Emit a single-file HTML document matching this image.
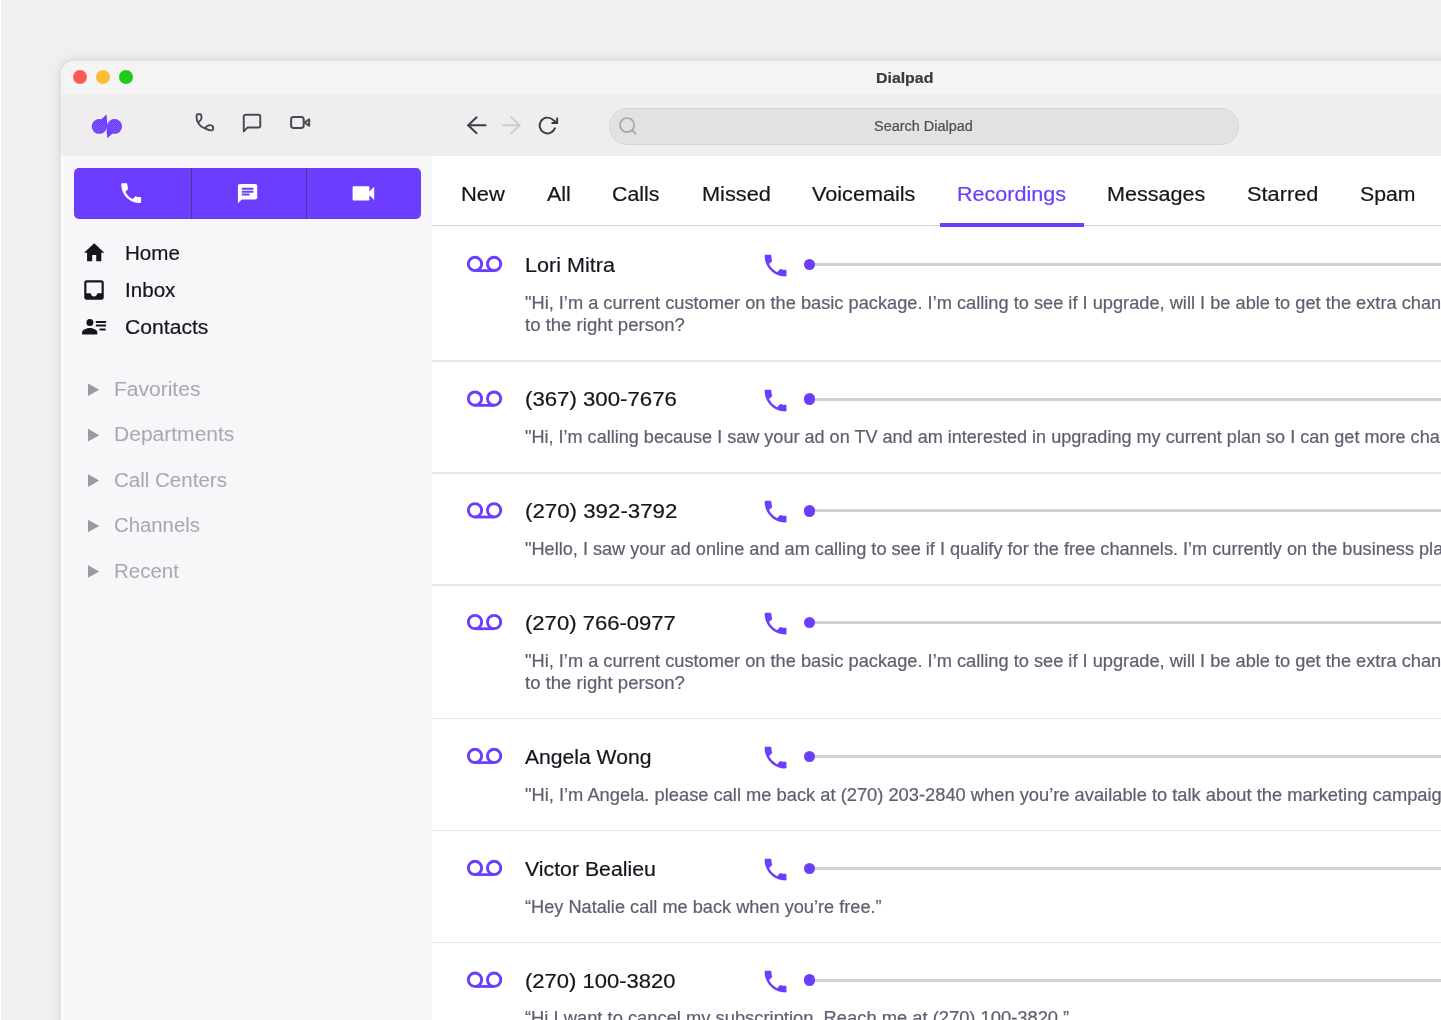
<!DOCTYPE html>
<html lang="en">
<head>
<meta charset="utf-8">
<title>Dialpad</title>
<style>
html,body{margin:0;padding:0;overflow:hidden;}
body{width:1441px;height:1020px;overflow:hidden;position:relative;background:#f1f0ee;font-family:"Liberation Sans",Arial,sans-serif;}
.edge{position:absolute;left:0;top:0;width:1px;height:1020px;background:#fff;}
.win{position:absolute;left:59px;top:59px;width:1700px;height:1100px;border:2px solid #e1e1e1;border-radius:16px;background:#fff;overflow:hidden;box-shadow:0 0 0 1px #e3e3e3,0 0 0 4px #eae9e9,0 0 0 10.500px #efeded;}
.abs{position:absolute;}
.titlebar{left:61px;top:61px;width:1400px;height:33px;background:#f4f4f4;border-top-left-radius:14px;}
.toolbar{left:61px;top:94px;width:1400px;height:62px;background:#efedee;}
.sidebar{left:61px;top:156px;width:371px;height:900px;background:#f7f7f9;}
.main{left:432px;top:156px;width:1100px;height:900px;background:#fff;}
.light{width:14px;height:14px;border-radius:50%;top:69.9px;}
.search{left:608.500px;top:107.500px;width:628.500px;height:35px;border-radius:19px;background:#e2e2e2;border:1px dotted #c6c5d4;}
.bar{left:74px;top:168px;width:347px;height:50.5px;border-radius:5px;background:#6c3dff;}
.div{top:168px;width:1px;height:50.5px;background:#4b3a93;}
.sep{left:432px;width:1100px;height:1.800px;background:#e5e4e6;}
.track{left:810px;width:700px;height:3px;background:#d0ced9;border-radius:2px;}
.dot{width:11.6px;height:11.6px;border-radius:50%;background:#6c3dff;left:803.8px;}
.t{position:absolute;white-space:nowrap;-webkit-text-stroke:0.2px currentColor;transform-origin:0 0;}
svg{position:absolute;overflow:visible;}
</style>
</head>
<body>
<div class="edge"></div>
<div class="win"></div>
<div class="abs titlebar"></div>
<div class="abs toolbar"></div>
<div class="abs sidebar"></div>
<div class="abs main"></div>
<div class="abs" style="left:61px;top:156px;width:2.200px;height:900px;background:#fefeff;"></div>

<!-- traffic lights -->
<div class="abs light" style="left:72.9px;background:#fd5b50;"></div>
<div class="abs light" style="left:96px;background:#febb34;"></div>
<div class="abs light" style="left:119.1px;background:#1fc91a;"></div>

<!-- logo -->
<svg style="left:82px;top:106px" width="50" height="40" viewBox="82 106 50 40">
 <defs>
  <pattern id="dots" x="82" y="106" width="2" height="2" patternUnits="userSpaceOnUse"><circle cx=".5" cy=".5" r=".3" fill="#fff" fill-opacity=".55"/><circle cx="1.5" cy="1.5" r=".3" fill="#fff" fill-opacity=".55"/></pattern>
  <clipPath id="lg"><circle cx="99.250" cy="126.400" r="6.400"/><circle cx="114.500" cy="126.400" r="6.400"/></clipPath>
 </defs>
 <g fill="#6c3dff">
 <circle cx="99.250" cy="126.400" r="7.450"/>
 <circle cx="114.500" cy="126.400" r="7.450"/>
 <polygon points="106.500,114.500 107.500,128.500 99.300,121.200"/>
 <polygon points="107.300,138.300 106.200,124.500 114.400,131.700"/>
 </g>
 <rect x="90" y="116" width="34" height="22" fill="url(#dots)" clip-path="url(#lg)"/>
</svg>

<!-- toolbar outline icons -->
<svg style="left:190px;top:108px" width="30" height="30" viewBox="190 108 30 30" fill="none" stroke="#4a4857" stroke-width="1.9" stroke-linecap="round" stroke-linejoin="round"><path d="M197.300 121 C198.700 124.700 201.600 127.600 205.800 128.600"/><path d="M197.300 121 C196.600 119 196.400 117 196.600 115.600 C196.700 114.600 197.200 114.300 198 114.250 L200 114.250 C200.800 114.300 201.200 114.700 201.350 115.600 C201.600 117 201.500 118.400 201.100 119.400 C200.600 120.400 199.300 121.400 198.300 122.400"/><path d="M205.800 128.600 C207.500 129.500 210.500 130.600 212 130.300 C213.300 130 213.600 127.500 212.800 126.400 C212 125.400 210 125 208.700 125.400 C207.300 125.900 205.800 127.300 204.800 128.200"/></svg>
<svg style="left:241.4px;top:111.7px" width="22" height="22" viewBox="0 0 24 24" fill="none" stroke="#4a4857" stroke-width="2.1" stroke-linecap="round" stroke-linejoin="round"><path d="M21 15a2 2 0 0 1-2 2H7l-4 4V5a2 2 0 0 1 2-2h14a2 2 0 0 1 2 2z"/></svg>
<svg style="left:288px;top:110px" width="26" height="26" viewBox="288 110 26 26" fill="none" stroke="#4a4857" stroke-width="2" stroke-linecap="round" stroke-linejoin="round"><rect x="291.1" y="117.1" width="12.6" height="10.8" rx="2.4"/><polygon points="304.6,122.5 309.1,119.3 309.1,125.8"/></svg>

<!-- nav arrows -->
<svg style="left:460px;top:110px" width="110" height="30" viewBox="460 110 110 30" fill="none" stroke-width="1.9" stroke-linecap="round" stroke-linejoin="round">
 <g stroke="#3b3a47"><line x1="468.2" y1="125.3" x2="485.6" y2="125.3"/><polyline points="476.6,117.3 468.2,125.3 476.6,133.2"/></g>
 <g stroke="#cdccd9"><line x1="503.2" y1="125.3" x2="519.6" y2="125.3"/><polyline points="511.2,117.3 519.6,125.3 511.2,133.2"/></g>
</svg>
<svg style="left:537.3px;top:115.3px" width="21" height="21" viewBox="0 0 24 24" fill="none" stroke="#3b3a47" stroke-width="2.2" stroke-linecap="round" stroke-linejoin="round"><polyline points="23 3.600 23 9.200 17.400 9.200"/><path d="M20.490 15a9 9 0 1 1-2.120-9.360L23 9.200"/></svg>

<!-- search -->
<div class="abs search"></div>
<svg style="left:616px;top:114px" width="24" height="24" viewBox="616 114 24 24" fill="none" stroke="#a5a4b0" stroke-width="1.7" stroke-linecap="round"><circle cx="627.1" cy="125.1" r="7.1"/><line x1="632.4" y1="130.4" x2="635.8" y2="133.8"/></svg>

<!-- purple bar -->
<div class="abs bar"></div>
<div class="abs div" style="left:191px"></div>
<div class="abs div" style="left:306px"></div>
<svg style="left:118.1px;top:179.8px" width="26.4" height="26.4" viewBox="0 0 24 24" fill="#fff"><path d="M6.62 10.79c1.44 2.83 3.76 5.14 6.59 6.59l2.2-2.2c.27-.27.67-.36 1.02-.24 1.12.37 2.33.57 3.57.57.55 0 1 .45 1 1V20c0 .55-.45 1-1 1-9.39 0-17-7.610-17-17 0-.55.45-1 1-1h3.500c.55 0 1 .45 1 1 0 1.250.2 2.450.57 3.570.11.350.03.740-.25 1.020l-2.200 2.200z"/></svg>
<svg style="left:235.9px;top:182.1px" width="23.2" height="23.2" viewBox="0 0 24 24" fill="#fff"><path d="M20 2H4c-1.1 0-1.990.9-1.990 2L2 22l4-4h14c1.100 0 2-.9 2-2V4c0-1.100-.9-2-2-2zM6 9h12v2H6V9zm8 5H6v-2h8v2zm4-6H6V6h12v2z"/></svg>
<svg style="left:348.700px;top:178.900px" width="28.8" height="28.8" viewBox="0 0 24 24" fill="#fff"><path d="M17 10.500V7c0-.55-.45-1-1-1H4c-.55 0-1 .45-1 1v10c0 .55.45 1 1 1h12c.55 0 1-.45 1-1v-3.500l4 4v-11l-4 4z"/></svg>

<!-- sidebar nav icons -->
<svg style="left:81.700px;top:239.800px" width="24.400" height="25.600" viewBox="0 0 24 24" preserveAspectRatio="none" fill="#16151d"><path d="M10 20v-6h4v6h5v-8h3L12 3 2 12h3v8z"/></svg>
<svg style="left:80.9px;top:276.7px" width="26" height="26" viewBox="0 0 24 24" fill="#16151d"><path d="M19 3H4.990c-1.110 0-1.980.9-1.980 2L3 19c0 1.100.88 2 1.990 2H19c1.100 0 2-.9 2-2V5c0-1.100-.9-2-2-2zm0 12h-4c0 1.660-1.350 3-3 3s-3-1.340-3-3H4.990V5H19v10z"/></svg>
<svg style="left:80px;top:316px" width="30" height="22" viewBox="80 316 30 22" fill="#16151d">
 <circle cx="89.9" cy="322.6" r="3.5"/>
 <path d="M82.100 334.400 v-1.900 c0-3 4.800-4.600 7.700-4.600 s7.500 1.600 7.500 4.600 v1.900z"/>
 <rect x="95.800" y="321.100" width="10.300" height="1.900" rx=".4"/>
 <rect x="95.800" y="324.600" width="10.300" height="1.900" rx=".4"/>
 <rect x="99.500" y="328.600" width="6.200" height="2" rx=".4"/>
</svg>

<!-- section triangles -->
<svg style="left:80px;top:370px" width="30" height="220" viewBox="80 370 30 220" fill="#9b9aa2">
 <polygon points="88,383.400 99.200,389.700 88,396"/>
 <polygon points="88,428.850 99.200,435.150 88,441.450"/>
 <polygon points="88,474.300 99.200,480.600 88,486.900"/>
 <polygon points="88,519.750 99.200,526.050 88,532.350"/>
 <polygon points="88,565.200 99.200,571.500 88,577.800"/>
</svg>

<!-- tabs border + active underline -->
<div class="abs" style="left:432px;top:224.900px;width:1100px;height:1.600px;background:#d6d5df;"></div>
<div class="abs" style="left:939.700px;top:223.100px;width:143.900px;height:3.500px;background:#6c3dff;"></div>

<svg style="left:460px;top:251px" width="50" height="26" viewBox="460 251 50 26" fill="none" stroke="#6c3dff" stroke-width="2.9"><circle cx="475" cy="263.90" r="6.650"/><circle cx="494.100" cy="263.90" r="6.650"/><line x1="475" y1="270.65" x2="494.100" y2="270.65" stroke-width="2.8"/></svg>
<svg style="left:760.650px;top:251.00px" width="29.200" height="29.200" viewBox="0 0 24 24" fill="#6c3dff"><path d="M6.620 10.790c1.440 2.830 3.760 5.140 6.590 6.590l2.200-2.200c.27-.27.67-.36 1.020-.24 1.120.37 2.330.57 3.570.57.55 0 1 .45 1 1V20c0 .55-.45 1-1 1-9.390 0-17-7.610-17-17 0-.55.45-1 1-1h3.500c.55 0 1 .45 1 1 0 1.250.2 2.450.57 3.570.11.350.03.740-.25 1.020l-2.200 2.200z"/></svg>
<div class="abs track" style="top:262.95px"></div>
<div class="abs dot" style="top:258.60px"></div>
<div class="abs sep" style="top:360.40px"></div>
<svg style="left:460px;top:386px" width="50" height="26" viewBox="460 386 50 26" fill="none" stroke="#6c3dff" stroke-width="2.9"><circle cx="475" cy="398.60" r="6.650"/><circle cx="494.100" cy="398.60" r="6.650"/><line x1="475" y1="405.35" x2="494.100" y2="405.35" stroke-width="2.8"/></svg>
<svg style="left:760.650px;top:385.70px" width="29.200" height="29.200" viewBox="0 0 24 24" fill="#6c3dff"><path d="M6.620 10.790c1.440 2.830 3.760 5.140 6.590 6.590l2.200-2.200c.27-.27.67-.36 1.020-.24 1.120.37 2.330.57 3.570.57.55 0 1 .45 1 1V20c0 .55-.45 1-1 1-9.390 0-17-7.610-17-17 0-.55.45-1 1-1h3.500c.55 0 1 .45 1 1 0 1.250.2 2.450.57 3.570.11.350.03.740-.25 1.020l-2.200 2.200z"/></svg>
<div class="abs track" style="top:397.65px"></div>
<div class="abs dot" style="top:393.30px"></div>
<div class="abs sep" style="top:472.10px"></div>
<svg style="left:460px;top:498px" width="50" height="26" viewBox="460 498 50 26" fill="none" stroke="#6c3dff" stroke-width="2.9"><circle cx="475" cy="510.30" r="6.650"/><circle cx="494.100" cy="510.30" r="6.650"/><line x1="475" y1="517.05" x2="494.100" y2="517.05" stroke-width="2.8"/></svg>
<svg style="left:760.650px;top:497.40px" width="29.200" height="29.200" viewBox="0 0 24 24" fill="#6c3dff"><path d="M6.620 10.790c1.440 2.830 3.760 5.140 6.590 6.590l2.200-2.200c.27-.27.67-.36 1.020-.24 1.120.37 2.330.57 3.570.57.55 0 1 .45 1 1V20c0 .55-.45 1-1 1-9.390 0-17-7.610-17-17 0-.55.45-1 1-1h3.500c.55 0 1 .45 1 1 0 1.250.2 2.450.57 3.570.11.350.03.740-.25 1.020l-2.200 2.200z"/></svg>
<div class="abs track" style="top:509.35px"></div>
<div class="abs dot" style="top:505.00px"></div>
<div class="abs sep" style="top:583.80px"></div>
<svg style="left:460px;top:609px" width="50" height="26" viewBox="460 609 50 26" fill="none" stroke="#6c3dff" stroke-width="2.9"><circle cx="475" cy="622.00" r="6.650"/><circle cx="494.100" cy="622.00" r="6.650"/><line x1="475" y1="628.75" x2="494.100" y2="628.75" stroke-width="2.8"/></svg>
<svg style="left:760.650px;top:609.10px" width="29.200" height="29.200" viewBox="0 0 24 24" fill="#6c3dff"><path d="M6.620 10.790c1.440 2.830 3.760 5.140 6.590 6.590l2.200-2.200c.27-.27.67-.36 1.020-.24 1.120.37 2.330.57 3.570.57.55 0 1 .45 1 1V20c0 .55-.45 1-1 1-9.390 0-17-7.610-17-17 0-.55.45-1 1-1h3.500c.55 0 1 .45 1 1 0 1.250.2 2.450.57 3.570.11.350.03.740-.25 1.020l-2.200 2.200z"/></svg>
<div class="abs track" style="top:621.05px"></div>
<div class="abs dot" style="top:616.70px"></div>
<div class="abs sep" style="top:717.70px"></div>
<svg style="left:460px;top:743px" width="50" height="26" viewBox="460 743 50 26" fill="none" stroke="#6c3dff" stroke-width="2.9"><circle cx="475" cy="755.90" r="6.650"/><circle cx="494.100" cy="755.90" r="6.650"/><line x1="475" y1="762.65" x2="494.100" y2="762.65" stroke-width="2.8"/></svg>
<svg style="left:760.650px;top:743.00px" width="29.200" height="29.200" viewBox="0 0 24 24" fill="#6c3dff"><path d="M6.620 10.790c1.440 2.830 3.760 5.140 6.590 6.590l2.200-2.200c.27-.27.67-.36 1.020-.24 1.120.37 2.330.57 3.570.57.55 0 1 .45 1 1V20c0 .55-.45 1-1 1-9.390 0-17-7.610-17-17 0-.55.45-1 1-1h3.500c.55 0 1 .45 1 1 0 1.250.2 2.450.57 3.570.11.350.03.740-.25 1.020l-2.200 2.200z"/></svg>
<div class="abs track" style="top:754.95px"></div>
<div class="abs dot" style="top:750.60px"></div>
<div class="abs sep" style="top:829.70px"></div>
<svg style="left:460px;top:855px" width="50" height="26" viewBox="460 855 50 26" fill="none" stroke="#6c3dff" stroke-width="2.9"><circle cx="475" cy="867.90" r="6.650"/><circle cx="494.100" cy="867.90" r="6.650"/><line x1="475" y1="874.65" x2="494.100" y2="874.65" stroke-width="2.8"/></svg>
<svg style="left:760.650px;top:855.00px" width="29.200" height="29.200" viewBox="0 0 24 24" fill="#6c3dff"><path d="M6.620 10.790c1.440 2.830 3.760 5.140 6.590 6.590l2.200-2.200c.27-.27.67-.36 1.020-.24 1.120.37 2.330.57 3.570.57.55 0 1 .45 1 1V20c0 .55-.45 1-1 1-9.390 0-17-7.610-17-17 0-.55.45-1 1-1h3.500c.55 0 1 .45 1 1 0 1.250.2 2.450.57 3.570.11.350.03.740-.25 1.020l-2.200 2.200z"/></svg>
<div class="abs track" style="top:866.95px"></div>
<div class="abs dot" style="top:862.60px"></div>
<div class="abs sep" style="top:941.50px"></div>
<svg style="left:460px;top:967px" width="50" height="26" viewBox="460 967 50 26" fill="none" stroke="#6c3dff" stroke-width="2.9"><circle cx="475" cy="979.70" r="6.650"/><circle cx="494.100" cy="979.70" r="6.650"/><line x1="475" y1="986.45" x2="494.100" y2="986.45" stroke-width="2.8"/></svg>
<svg style="left:760.650px;top:966.80px" width="29.200" height="29.200" viewBox="0 0 24 24" fill="#6c3dff"><path d="M6.620 10.790c1.440 2.830 3.760 5.140 6.590 6.590l2.200-2.200c.27-.27.67-.36 1.020-.24 1.120.37 2.330.57 3.570.57.55 0 1 .45 1 1V20c0 .55-.45 1-1 1-9.390 0-17-7.610-17-17 0-.55.45-1 1-1h3.500c.55 0 1 .45 1 1 0 1.250.2 2.450.57 3.570.11.350.03.740-.25 1.020l-2.200 2.200z"/></svg>
<div class="abs track" style="top:978.75px"></div>
<div class="abs dot" style="top:974.40px"></div>

<div id="tx" style="position:absolute;left:0;top:0;width:1441px;height:1020px;will-change:transform;">
<div class="t" id="title" style="left:876.25px;top:67.50px;font-size:15px;line-height:20px;color:#3a3942;transform:scaleX(1.0584);font-weight:700;">Dialpad</div>
<div class="t" id="search" style="left:874.08px;top:117.25px;font-size:14px;line-height:18px;color:#4d4b5a;transform:scaleX(1.0318);">Search Dialpad</div>
<div class="t" id="tab0" style="left:461.40px;top:180.67px;font-size:20px;line-height:26px;color:#16151d;transform:scaleX(1.0971);">New</div>
<div class="t" id="tab1" style="left:546.90px;top:180.67px;font-size:20px;line-height:26px;color:#16151d;transform:scaleX(1.0749);">All</div>
<div class="t" id="tab2" style="left:612.40px;top:180.67px;font-size:20px;line-height:26px;color:#16151d;transform:scaleX(1.0663);">Calls</div>
<div class="t" id="tab3" style="left:701.90px;top:180.67px;font-size:20px;line-height:26px;color:#16151d;transform:scaleX(1.0874);">Missed</div>
<div class="t" id="tab4" style="left:812.40px;top:180.67px;font-size:20px;line-height:26px;color:#16151d;transform:scaleX(1.0815);">Voicemails</div>
<div class="t" id="tab5" style="left:956.90px;top:180.67px;font-size:20px;line-height:26px;color:#6c3dff;transform:scaleX(1.0764);">Recordings</div>
<div class="t" id="tab6" style="left:1107.40px;top:180.67px;font-size:20px;line-height:26px;color:#16151d;transform:scaleX(1.0795);">Messages</div>
<div class="t" id="tab7" style="left:1246.90px;top:180.67px;font-size:20px;line-height:26px;color:#16151d;transform:scaleX(1.0885);">Starred</div>
<div class="t" id="tab8" style="left:1360.40px;top:180.67px;font-size:20px;line-height:26px;color:#16151d;transform:scaleX(1.0603);">Spam</div>
<div class="t" id="nav0" style="left:125.40px;top:239.87px;font-size:20px;line-height:26px;color:#16151d;transform:scaleX(1.0289);">Home</div>
<div class="t" id="nav1" style="left:125.40px;top:276.87px;font-size:20px;line-height:26px;color:#16151d;transform:scaleX(1.0299);">Inbox</div>
<div class="t" id="nav2" style="left:125.40px;top:313.87px;font-size:20px;line-height:26px;color:#16151d;transform:scaleX(1.0565);">Contacts</div>
<div class="t" id="sec0" style="left:113.90px;top:375.77px;font-size:20px;line-height:26px;color:#a9a8b1;transform:scaleX(1.0505);-webkit-text-stroke:0.05px currentColor;">Favorites</div>
<div class="t" id="sec1" style="left:113.90px;top:421.22px;font-size:20px;line-height:26px;color:#a9a8b1;transform:scaleX(1.0515);-webkit-text-stroke:0.05px currentColor;">Departments</div>
<div class="t" id="sec2" style="left:113.90px;top:466.67px;font-size:20px;line-height:26px;color:#a9a8b1;transform:scaleX(1.0259);-webkit-text-stroke:0.05px currentColor;">Call Centers</div>
<div class="t" id="sec3" style="left:113.90px;top:512.12px;font-size:20px;line-height:26px;color:#a9a8b1;transform:scaleX(1.0164);-webkit-text-stroke:0.05px currentColor;">Channels</div>
<div class="t" id="sec4" style="left:113.90px;top:557.57px;font-size:20px;line-height:26px;color:#a9a8b1;transform:scaleX(1.0241);-webkit-text-stroke:0.05px currentColor;">Recent</div>
<div class="t" id="name0" style="left:525.40px;top:251.77px;font-size:20px;line-height:26px;color:#16151d;transform:scaleX(1.0785);">Lori Mitra</div>
<div class="t" id="tr0_0" style="left:525.48px;top:291.54px;font-size:17.5px;line-height:23px;color:#5f5d6e;transform:scaleX(1.0415);width:920px;overflow:hidden;">"Hi, I’m a current customer on the basic package. I’m calling to see if I upgrade, will I be able to get the extra chan</div>
<div class="t" id="tr0_1" style="left:525.48px;top:314.19px;font-size:17.5px;line-height:23px;color:#5f5d6e;transform:scaleX(1.0605);width:920px;overflow:hidden;">to the right person?</div>
<div class="t" id="name1" style="left:525.40px;top:386.47px;font-size:20px;line-height:26px;color:#16151d;transform:scaleX(1.1105);">(367) 300-7676</div>
<div class="t" id="tr1_0" style="left:525.48px;top:426.24px;font-size:17.5px;line-height:23px;color:#5f5d6e;transform:scaleX(1.0322);width:920px;overflow:hidden;">"Hi, I’m calling because I saw your ad on TV and am interested in upgrading my current plan so I can get more cha</div>
<div class="t" id="name2" style="left:525.40px;top:498.17px;font-size:20px;line-height:26px;color:#16151d;transform:scaleX(1.1142);">(270) 392-3792</div>
<div class="t" id="tr2_0" style="left:525.48px;top:537.94px;font-size:17.5px;line-height:23px;color:#5f5d6e;transform:scaleX(1.0369);width:920px;overflow:hidden;">"Hello, I saw your ad online and am calling to see if I qualify for the free channels. I’m currently on the business pla</div>
<div class="t" id="name3" style="left:525.40px;top:609.87px;font-size:20px;line-height:26px;color:#16151d;transform:scaleX(1.1032);">(270) 766-0977</div>
<div class="t" id="tr3_0" style="left:525.48px;top:649.64px;font-size:17.5px;line-height:23px;color:#5f5d6e;transform:scaleX(1.0415);width:920px;overflow:hidden;">"Hi, I’m a current customer on the basic package. I’m calling to see if I upgrade, will I be able to get the extra chan</div>
<div class="t" id="tr3_1" style="left:525.48px;top:672.29px;font-size:17.5px;line-height:23px;color:#5f5d6e;transform:scaleX(1.0605);width:920px;overflow:hidden;">to the right person?</div>
<div class="t" id="name4" style="left:525.40px;top:743.77px;font-size:20px;line-height:26px;color:#16151d;transform:scaleX(1.0558);">Angela Wong</div>
<div class="t" id="tr4_0" style="left:525.48px;top:783.54px;font-size:17.5px;line-height:23px;color:#5f5d6e;transform:scaleX(1.0455);width:920px;overflow:hidden;">"Hi, I’m Angela. please call me back at (270) 203-2840 when you’re available to talk about the marketing campaig</div>
<div class="t" id="name5" style="left:525.40px;top:855.77px;font-size:20px;line-height:26px;color:#16151d;transform:scaleX(1.0638);">Victor Bealieu</div>
<div class="t" id="tr5_0" style="left:525.48px;top:895.54px;font-size:17.5px;line-height:23px;color:#5f5d6e;transform:scaleX(1.0387);width:920px;overflow:hidden;">“Hey Natalie call me back when you’re free.”</div>
<div class="t" id="name6" style="left:525.40px;top:967.57px;font-size:20px;line-height:26px;color:#16151d;transform:scaleX(1.0996);">(270) 100-3820</div>
<div class="t" id="tr6_0" style="left:525.48px;top:1007.34px;font-size:17.5px;line-height:23px;color:#5f5d6e;transform:scaleX(1.0478);width:920px;overflow:hidden;">“Hi I want to cancel my subscription. Reach me at (270) 100-3820.”</div>
</div>
</body>
</html>
